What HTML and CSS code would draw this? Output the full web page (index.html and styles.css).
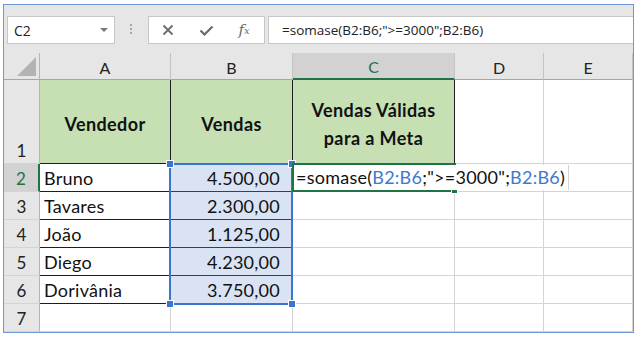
FILE: index.html
```html
<!DOCTYPE html>
<html lang="pt-BR">
<head>
    <meta charset="UTF-8">
    <title>Planilha - SOMASE</title>
    <link rel="stylesheet" href="styles.css">
</head>
<body>

    <div class="window">
        <!-- barra de fórmulas -->
        <div class="toolbar">
            <div class="namebox">
                <span class="name">C2</span>
                <span class="caret"></span>
            </div>
            <div class="grip"><i></i><i></i><i></i></div>
            <div class="fx-buttons">
                <span class="slot">
                    <svg width="12" height="12" viewBox="0 0 12 12"><path d="M1.5 1.5 L10.5 10.5 M10.5 1.5 L1.5 10.5" stroke="#6b6b6b" stroke-width="1.8" fill="none"/></svg>
                </span>
                <span class="slot">
                    <svg width="15" height="11" viewBox="0 0 15 11"><path d="M1.5 5.5 L5.5 9.5 L13.5 1.5" stroke="#6b6b6b" stroke-width="2.2" fill="none"/></svg>
                </span>
                <span class="slot fx">f<sub>x</sub></span>
            </div>
            <div class="formula">=somase(B2:B6;"&gt;=3000";B2:B6)</div>
        </div>

        <!-- planilha -->
        <div class="sheet">
            <div class="corner">
                <svg width="19" height="19" viewBox="0 0 19 19"><polygon points="19,0 19,19 0,19" fill="#b3b3b3"/></svg>
            </div>
            <div class="col-head">A</div>
            <div class="col-head">B</div>
            <div class="col-head is-active">C</div>
            <div class="col-head">D</div>
            <div class="col-head last">E</div>

            <div class="row-head first">1</div>
            <div class="cell head b-black">Vendedor</div>
            <div class="cell head b-black">Vendas</div>
            <div class="cell head b-black">Vendas Válidas<br>para a Meta</div>
            <div class="cell"></div>
            <div class="cell last"></div>

            <div class="row-head is-active">2</div>
            <div class="cell b-black">Bruno</div>
            <div class="cell num b-black sel">4.500,00</div>
            <div class="cell"></div>
            <div class="cell"></div>
            <div class="cell last"></div>

            <div class="row-head">3</div>
            <div class="cell b-black">Tavares</div>
            <div class="cell num b-black sel">2.300,00</div>
            <div class="cell"></div>
            <div class="cell"></div>
            <div class="cell last"></div>

            <div class="row-head">4</div>
            <div class="cell b-black">João</div>
            <div class="cell num b-black sel">1.125,00</div>
            <div class="cell"></div>
            <div class="cell"></div>
            <div class="cell last"></div>

            <div class="row-head">5</div>
            <div class="cell b-black">Diego</div>
            <div class="cell num b-black sel">4.230,00</div>
            <div class="cell"></div>
            <div class="cell"></div>
            <div class="cell last"></div>

            <div class="row-head">6</div>
            <div class="cell b-black">Dorivânia</div>
            <div class="cell num b-black sel">3.750,00</div>
            <div class="cell"></div>
            <div class="cell"></div>
            <div class="cell last"></div>

            <div class="row-head">7</div>
            <div class="cell"></div>
            <div class="cell"></div>
            <div class="cell"></div>
            <div class="cell"></div>
            <div class="cell last"></div>

            <!-- intervalo referenciado B2:B6 -->
            <div class="range">
                <span class="handle tl"></span>
                <span class="handle tr"></span>
                <span class="handle bl"></span>
                <span class="handle br"></span>
            </div>

            <!-- célula ativa -->
            <div class="active-cell"><span class="fill-handle"></span></div>

            <!-- edição da célula C2 -->
            <div class="editor">=somase(<span class="ref">B2:B6</span>;"&gt;=3000";<span class="ref">B2:B6</span>)</div>
        </div>
    </div>

</body>
</html>
```

FILE: styles.css
```css
body {
    margin: 0;
    background-color: #fff;
}
.window {
    box-sizing: border-box;
    width: 631px;
    height: 329px;
    margin: 4px 0 0 3px;
    border: 1px solid #6f98d8;
    background-color: #e6e6e6;
    overflow: hidden;
}

/* barra de fórmulas */
.toolbar {
    box-sizing: border-box;
    height: 48px;
    display: flex;
    align-items: flex-start;
    padding: 11px 0 0 3px;
}
.namebox,
.fx-buttons,
.formula {
    box-sizing: border-box;
    height: 28px;
    background-color: #fff;
    border: 1px solid #c6c6c6;
}
.namebox {
    width: 108px;
    display: flex;
    align-items: center;
    justify-content: space-between;
    padding: 0 6px 0 6px;
}
.namebox .name {
    font: 14px "Open Sans", sans-serif;
    color: #222;
}
.namebox .caret {
    width: 0;
    height: 0;
    border-left: 4px solid transparent;
    border-right: 4px solid transparent;
    border-top: 4px solid #7a7a7a;
}
.grip {
    width: 3px;
    margin: 8px 15px 0 15px;
    display: flex;
    flex-direction: column;
    gap: 2px;
}
.grip i {
    display: block;
    width: 2px;
    height: 2px;
    background-color: #a8a8a8;
}
.fx-buttons {
    width: 117px;
    display: flex;
    margin-right: 3px;
}
.fx-buttons .slot {
    width: 38px;
    display: flex;
    align-items: center;
    justify-content: center;
}
.fx-buttons .fx {
    font: italic 15px "DejaVu Serif", serif;
    color: #6b6b6b;
}
.fx-buttons .fx sub {
    font-size: 10px;
    vertical-align: -1px;
}
.formula {
    flex: 1;
    border-right: 0;
    padding-left: 13px;
    font: 13.5px "Open Sans", sans-serif;
    line-height: 26px;
    color: #222;
    white-space: nowrap;
}

/* planilha */
.sheet {
    position: relative;
    display: grid;
    grid-template-columns: 36px 131px 122px 162px 89px 89px;
    grid-template-rows: 27px 84px repeat(6, 28px);
    font-family: Lato, "Liberation Sans", sans-serif;
    color: #111;
}
.corner {
    box-sizing: border-box;
    border-right: 1px solid #b5b5b5;
    border-bottom: 1px solid #a6a6a6;
    display: flex;
    align-items: flex-end;
    justify-content: flex-end;
    padding: 0 3px 3px 0;
}
.col-head {
    box-sizing: border-box;
    border-right: 1px solid #c4c4c4;
    border-bottom: 1px solid #a6a6a6;
    display: flex;
    align-items: center;
    justify-content: center;
    padding-top: 2px;
    font-size: 16px;
    color: #222;
}
.col-head.is-active {
    background-color: #d2d2d2;
    color: #217346;
    border-bottom: 2px solid #217346;
}
.row-head {
    box-sizing: border-box;
    border-right: 1px solid #b5b5b5;
    border-bottom: 1px solid #d4d4d4;
    display: flex;
    align-items: center;
    justify-content: center;
    font-size: 17px;
    color: #222;
    padding-top: 1px;
}
.row-head.first {
    align-items: flex-end;
    padding-bottom: 2px;
}
.row-head.is-active {
    background-color: #d2d2d2;
    color: #217346;
    border-right: 2px solid #217346;
}
.cell {
    box-sizing: border-box;
    background-color: #fff;
    border-right: 1px solid #d4d4d4;
    border-bottom: 1px solid #d4d4d4;
    display: flex;
    align-items: center;
    padding: 1px 4px 0 4px;
    font-size: 18px;
    letter-spacing: 0.25px;
    white-space: nowrap;
}
.cell.b-black {
    border-right-color: #1e1e1e;
    border-bottom-color: #1e1e1e;
}
.cell.head {
    background-color: #c6e0b4;
    justify-content: center;
    text-align: center;
    font-weight: bold;
    letter-spacing: 0.4px;
    line-height: 28px;
    padding-top: 4px;
}
.cell.num {
    justify-content: flex-end;
    padding-right: 12px;
}
.cell.sel {
    background-color: #d9e3f4;
    border-bottom-color: #3a3f48;
}
.cell.last {
    border-right-color: #d4d4d4;
}

/* sobreposições */
.range {
    position: absolute;
    left: 165px;
    top: 110px;
    width: 124px;
    height: 142px;
    box-sizing: border-box;
    border: 2px solid #3c74d2;
}
.range .handle {
    position: absolute;
    width: 6px;
    height: 6px;
    background-color: #3c74d2;
    border: 1px solid #fff;
}
.range .tl { left: -5px; top: -5px; }
.range .tr { right: -5px; top: -5px; }
.range .bl { left: -5px; bottom: -5px; }
.range .br { right: -5px; bottom: -5px; }
.active-cell {
    position: absolute;
    left: 288px;
    top: 110px;
    width: 164px;
    height: 29px;
    box-sizing: border-box;
    border: 2px solid #217346;
}
.fill-handle {
    position: absolute;
    right: -4px;
    bottom: -4px;
    width: 5px;
    height: 5px;
    background-color: #217346;
    border: 1px solid #fff;
}
.editor {
    position: absolute;
    left: 290px;
    top: 112px;
    width: 275px;
    height: 25px;
    box-sizing: border-box;
    background-color: #fff;
    border-right: 1px solid #d4d4d4;
    padding: 0 0 0 2px;
    font-size: 18px;
    letter-spacing: 0.25px;
    line-height: 25px;
    white-space: nowrap;
}
.editor .ref {
    color: #3f78d0;
}
```
